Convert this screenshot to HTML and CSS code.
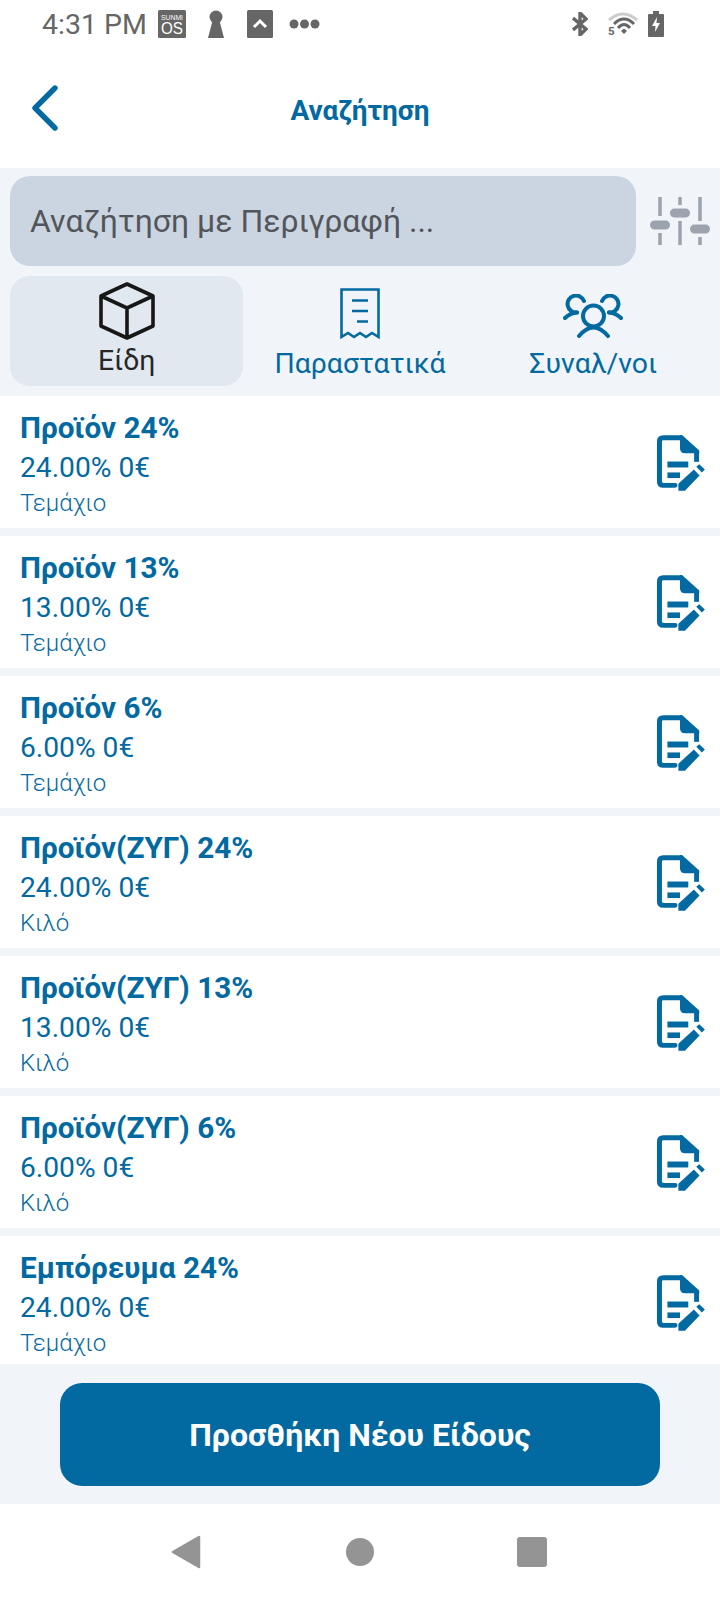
FILE: index.html
```html
<!DOCTYPE html>
<html lang="el">
<head>
  <meta charset="utf-8" />
  <title>Αναζήτηση</title>
  <link rel="stylesheet" href="styles.css">
</head>
<body>
  <svg class="defs" width="0" height="0">
    <symbol id="edit" viewBox="78 42 150 175">
      <path d="M135 197 H100 Q88 197 88 185 V65 Q88 53 100 53 H150" fill="none" stroke="currentColor" stroke-width="15" stroke-linecap="round"/>
      <path d="M200 95 V126" fill="none" stroke="currentColor" stroke-width="15"/>
      <path d="M150 45 L156 45 L208 92 V100 H165 Q150 100 150 85 Z" fill="currentColor"/>
      <rect x="112" y="125" width="63" height="18" fill="currentColor"/>
      <rect x="112" y="158" width="38" height="17" fill="currentColor"/>
      <path d="M145 213 V192 L192 149 L209 167 L165 213 Z" fill="currentColor"/>
      <path d="M199 141 L208 133 L225 149 L216 158 Z" fill="currentColor"/>
    </symbol>
  </svg>

  <div class="app">
    <div class="status">
      <span class="time">4:31 PM</span>
      <svg class="st-sunmi" width="28" height="28" viewBox="0 0 28 28">
        <rect width="28" height="28" rx="1.5" fill="#666"/>
        <text x="14" y="10" text-anchor="middle" textLength="22" lengthAdjust="spacingAndGlyphs" class="sunmi-a">SUNMI</text>
        <text x="14" y="24" text-anchor="middle" textLength="22" lengthAdjust="spacingAndGlyphs" class="sunmi-b">OS</text>
      </svg>
      <svg class="st-key" width="16" height="28" viewBox="0 0 16 28">
        <circle cx="8" cy="7" r="6.5" fill="#666"/>
        <path d="M5 9 H11 L16 28 H0 Z" fill="#666"/>
      </svg>
      <svg class="st-up" width="26" height="28" viewBox="0 0 26 28">
        <rect width="26" height="28" rx="1.5" fill="#666"/>
        <path d="M7 17 L13 11 L19 17" fill="none" stroke="#fff" stroke-width="3"/>
      </svg>
      <svg class="st-dots" width="31" height="10" viewBox="0 0 31 10">
        <circle cx="5" cy="5" r="4.5" fill="#666"/>
        <circle cx="15.5" cy="5" r="4.5" fill="#666"/>
        <circle cx="26" cy="5" r="4.5" fill="#666"/>
      </svg>
      <span class="status-gap"></span>
      <svg class="st-bt" width="16" height="24" viewBox="0 0 16 24">
        <path d="M1 6 L14 17 L8 23 V1 L14 7 L1 18" fill="none" stroke="#666" stroke-width="3.4"/>
      </svg>
      <svg class="st-wifi" width="32" height="28" viewBox="0 0 32 28">
        <path d="M1 10 Q15 -2 29 10" fill="none" stroke="#ccc" stroke-width="3"/>
        <path d="M6 14 Q16 4 26 14" fill="none" stroke="#666" stroke-width="3"/>
        <path d="M10 18 Q16 11 22 18" fill="none" stroke="#666" stroke-width="3"/>
        <path d="M13 21 L16 18.5 L19 21 L16 24 Z" fill="#666"/>
        <text x="0" y="25" class="wifi-5">5</text>
      </svg>
      <svg class="st-bat" width="16" height="26" viewBox="0 0 16 26">
        <path d="M5 0 H11 V3 H15 Q16 3 16 4 V25 Q16 26 15 26 H1 Q0 26 0 25 V4 Q0 3 1 3 H5 Z" fill="#666"/>
        <path d="M9 6 L4 15 H7.5 L7 21 L12 12 H8.5 Z" fill="#fff"/>
      </svg>
    </div>

    <div class="header">
      <svg class="back" width="26" height="46" viewBox="0 0 26 46">
        <path d="M23 3 L3 23 L23 43" fill="none" stroke="#0369a1" stroke-width="5.4" stroke-linecap="round" stroke-linejoin="round"/>
      </svg>
      <h1>Αναζήτηση</h1>
    </div>

    <div class="top-panel">
      <div class="search-row">
        <div class="search">Αναζήτηση με Περιγραφή ...</div>
        <svg class="filters" width="60" height="48" viewBox="0 0 60 48">
          <g stroke="#9ca3af" stroke-width="3.5" fill="none">
            <path d="M10 0 V19 M10 36 V48 M30 0 V8 M30 24 V48 M50 0 V24 M50 40 V48"/>
          </g>
          <g stroke="#9ca3af" stroke-width="9" stroke-linecap="round" fill="none">
            <path d="M4.5 28 H15.5 M24.5 16 H35.5 M44.5 32 H55.5"/>
          </g>
        </svg>
      </div>
      <div class="tabs">
        <div class="tab active">
          <svg class="ico-cube" width="58" height="58" viewBox="0 0 58 58">
            <path d="M29 2 L55 14 V44 L29 56 L3 44 V14 Z M3 14 L29 26 L55 14 M29 26 V56" fill="none" stroke="#171717" stroke-width="3.6" stroke-linejoin="round"/>
          </svg>
          <span>Είδη</span>
        </div>
        <div class="tab">
          <svg class="ico-receipt" width="40" height="52" viewBox="0 0 40 52">
            <path d="M1.5 1.5 H38.5 V49 L32 45 L26 49 L20 45 L14 49 L8 45 L1.5 49 Z" fill="none" stroke="#0369a1" stroke-width="2.6"/>
            <path d="M12 12.5 H28 M12 23 H28 M17 33.5 H28" stroke="#0369a1" stroke-width="2.6"/>
          </svg>
          <span>Παραστατικά</span>
        </div>
        <div class="tab">
          <svg class="ico-users" width="60" height="44" viewBox="0 0 60 44">
            <g fill="none" stroke="#0369a1" stroke-width="4" stroke-linecap="round">
              <circle cx="30.5" cy="22" r="10.5"/>
              <path d="M16 42 Q30.5 25 45 42"/>
              <path d="M21 7 A8.5 8.5 0 1 0 14 18.5"/>
              <path d="M14 18.5 Q7 19 2 24"/>
              <path d="M39 7 A8.5 8.5 0 1 1 46 18.5"/>
              <path d="M46 18.5 Q53 19 58 24"/>
            </g>
          </svg>
          <span>Συναλ/νοι</span>
        </div>
      </div>
    </div>

    <div class="list">
      <div class="item">
        <div class="item-text">
          <div class="name">Προϊόν 24%</div>
          <div class="price">24.00% 0€</div>
          <div class="unit">Τεμάχιο</div>
        </div>
        <svg class="edit"><use href="#edit"/></svg>
      </div>
      <div class="item">
        <div class="item-text">
          <div class="name">Προϊόν 13%</div>
          <div class="price">13.00% 0€</div>
          <div class="unit">Τεμάχιο</div>
        </div>
        <svg class="edit"><use href="#edit"/></svg>
      </div>
      <div class="item">
        <div class="item-text">
          <div class="name">Προϊόν 6%</div>
          <div class="price">6.00% 0€</div>
          <div class="unit">Τεμάχιο</div>
        </div>
        <svg class="edit"><use href="#edit"/></svg>
      </div>
      <div class="item">
        <div class="item-text">
          <div class="name">Προϊόν(ΖΥΓ) 24%</div>
          <div class="price">24.00% 0€</div>
          <div class="unit">Κιλό</div>
        </div>
        <svg class="edit"><use href="#edit"/></svg>
      </div>
      <div class="item">
        <div class="item-text">
          <div class="name">Προϊόν(ΖΥΓ) 13%</div>
          <div class="price">13.00% 0€</div>
          <div class="unit">Κιλό</div>
        </div>
        <svg class="edit"><use href="#edit"/></svg>
      </div>
      <div class="item">
        <div class="item-text">
          <div class="name">Προϊόν(ΖΥΓ) 6%</div>
          <div class="price">6.00% 0€</div>
          <div class="unit">Κιλό</div>
        </div>
        <svg class="edit"><use href="#edit"/></svg>
      </div>
      <div class="item">
        <div class="item-text">
          <div class="name">Εμπόρευμα 24%</div>
          <div class="price">24.00% 0€</div>
          <div class="unit">Τεμάχιο</div>
        </div>
        <svg class="edit"><use href="#edit"/></svg>
      </div>
    </div>

    <div class="footer">
      <div class="add-btn">Προσθήκη Νέου Είδους</div>
    </div>

    <div class="navbar">
      <svg width="30" height="34" viewBox="0 0 30 34"><path d="M28 2 V32 L2 17 Z" fill="#949494" stroke="#949494" stroke-width="2.5" stroke-linejoin="round"/></svg>
      <svg width="28" height="28" viewBox="0 0 28 28"><circle cx="14" cy="14" r="14" fill="#949494"/></svg>
      <svg class="nav-square" width="30" height="30" viewBox="0 0 30 30"><rect width="30" height="30" rx="3" fill="#949494"/></svg>
    </div>
  </div>
</body>
</html>
```

FILE: styles.css
```css
* {
  box-sizing: border-box;
}

body {
  margin: 0;
  font-family: Roboto, "Noto Sans", sans-serif;
  background: #fff;
}

.defs {
  position: absolute;
}

.app {
  width: 720px;
  height: 1600px;
  display: flex;
  flex-direction: column;
  overflow: hidden;
}

/* status bar */
.status {
  height: 48px;
  padding-left: 42px;
  display: flex;
  align-items: center;
  color: #666;
}

.time {
  font-size: 28.5px;
  width: 116px;
  white-space: nowrap;
}

.st-key { margin-left: 22px; }
.st-up { margin-left: 23px; }
.st-dots { margin-left: 16px; }
.status-gap { flex: 1; }
.st-bt { margin-right: 20px; }
.st-wifi { margin-right: 8px; }
.st-bat { margin-right: 56px; }

.sunmi-a {
  font: 400 7px "Liberation Sans", sans-serif;
  fill: #fff;
}

.sunmi-b {
  font: 400 16px "Liberation Sans", sans-serif;
  fill: #fff;
}

.wifi-5 {
  font: 700 11.5px Roboto, sans-serif;
  fill: #666;
}

/* header */
.header {
  height: 120px;
  position: relative;
  display: flex;
  align-items: center;
  justify-content: center;
}

.back {
  position: absolute;
  left: 32px;
  top: 37px;
}

.header h1 {
  margin: 4px 0 0;
  font-size: 28px;
  font-weight: 700;
  color: #0369a1;
}

/* search + tabs */
.top-panel {
  background: #f1f5f9;
  padding: 8px 10px 10px;
}

.search-row {
  display: flex;
  align-items: center;
  justify-content: space-between;
}

.search {
  width: 626px;
  height: 90px;
  padding-left: 20px;
  display: flex;
  align-items: center;
  background: #cbd5e1;
  border-radius: 20px;
  font-size: 32px;
  color: #52565b;
}

.tabs {
  margin-top: 10px;
  display: grid;
  grid-template-columns: repeat(3, 1fr);
  height: 110px;
}

.tab {
  display: flex;
  flex-direction: column;
  align-items: center;
  justify-content: flex-end;
  padding-bottom: 6px;
  font-size: 28.4px;
  color: #0369a1;
  border-radius: 20px;
  white-space: nowrap;
}

.tab span {
  margin-top: 6px;
}

.tab.active {
  background: #e2e8f0;
  color: #262626;
  padding-bottom: 9px;
}

.ico-cube { margin-bottom: -2px; }
.ico-receipt { margin-bottom: 1px; }
.ico-users { margin-bottom: 3px; }

/* list */
.list {
  flex: 1;
  min-height: 0;
  overflow: hidden;
  background: #f1f5f9;
  display: flex;
  flex-direction: column;
  gap: 8px;
}

.item {
  flex-shrink: 0;
  height: 132px;
  padding: 14px 14px 0 20px;
  background: #fff;
  display: flex;
  justify-content: space-between;
  color: #0369a1;
}

.name {
  font-size: 29.7px;
  font-weight: 700;
  line-height: 36px;
}

.price {
  margin-top: 2px;
  font-size: 28.2px;
  line-height: 40px;
}

.unit {
  font-size: 24px;
  font-weight: 300;
  line-height: 30px;
}

.edit {
  width: 50px;
  height: 58px;
  margin-top: 24px;
  color: #0369a1;
}

/* bottom */
.footer {
  height: 140px;
  background: #f1f5f9;
  padding: 19px 60px 18px;
}

.add-btn {
  height: 103px;
  display: flex;
  align-items: center;
  justify-content: center;
  background: #0369a1;
  border-radius: 22px;
  color: #fff;
  font-size: 32px;
  font-weight: 700;
}

.navbar {
  height: 96px;
  padding-left: 171px;
  display: flex;
  align-items: center;
  gap: 145px;
}

.nav-square {
  margin-left: -2px;
}
```
